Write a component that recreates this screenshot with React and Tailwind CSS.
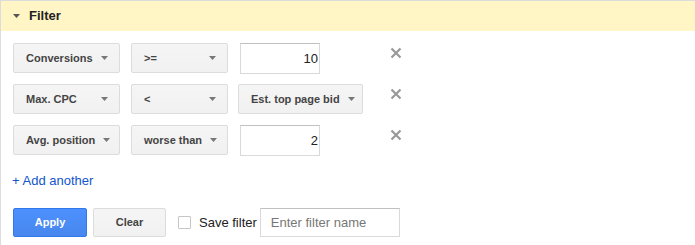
import React from "react";

function Arrow() {
  return (
    <svg width="7" height="4" viewBox="0 0 7 4" className="shrink-0">
      <polygon points="0,0 7,0 3.5,4" fill="#777" />
    </svg>
  );
}

function XIcon() {
  return (
    <svg width="12" height="12" viewBox="0 0 12 12" className="shrink-0">
      <path d="M1.5 1.5 L10.5 10.5 M10.5 1.5 L1.5 10.5" stroke="#999" strokeWidth="2.2" strokeLinecap="butt" />
    </svg>
  );
}

function Select({ label, w }) {
  return (
    <div
      className={`${w} h-[30px] shrink-0 flex items-center justify-between pl-[12px] pr-[11px] gap-[8px] rounded-[2px] border border-[#dcdcdc] bg-gradient-to-b from-[#f5f5f5] to-[#f1f1f1] text-[11px] font-bold text-[#444] whitespace-nowrap`}
    >
      <span>{label}</span>
      <Arrow />
    </div>
  );
}

function NumInput({ value }) {
  return (
    <div className="ml-[2px] w-[80px] h-[31px] shrink-0 flex items-center justify-end pr-[1px] border border-[#d9d9d9] border-t-[#c0c0c0] bg-white text-[13px] text-[#222]">
      {value}
    </div>
  );
}

function Row({ a, b, third }) {
  return (
    <div className="flex items-start h-[30px]">
      <Select label={a} w="w-[107px]" />
      <div className="ml-[11px]">
        <Select label={b} w="w-[97px]" />
      </div>
      <div className="ml-[10px] w-[152px] shrink-0 flex">{third}</div>
      <div className="pt-[4px]">
        <XIcon />
      </div>
    </div>
  );
}

export default function App() {
  return (
    <div
      className="w-[695px] h-[245px] bg-white border-l border-t border-[#dcdcdc] overflow-hidden"
      style={{ fontFamily: '"Liberation Sans", Arial, sans-serif' }}
    >
      <div className="h-[30px] bg-[#fff5c5] flex items-center pl-[12px]">
        <svg width="7" height="4" viewBox="0 0 7 4" className="mr-[9px]">
          <polygon points="0,0 7,0 3.5,4" fill="#555" />
        </svg>
        <span className="text-[13px] font-bold text-[#222]">Filter</span>
      </div>
      <div className="pl-[12px] pt-[12px]">
        <div className="flex flex-col gap-[11px]">
          <Row a="Conversions" b=">=" third={<NumInput value="10" />} />
          <Row
            a="Max. CPC"
            b="<"
            third={<Select label="Est. top page bid" w="w-[125px]" />}
          />
          <Row a="Avg. position" b="worse than" third={<NumInput value="2" />} />
        </div>
        <div className="mt-[18px] h-[16px] leading-[16px] text-[13px] text-[#15c] -ml-[1px]">
          + Add another
        </div>
        <div className="mt-[19px] flex items-center">
          <div className="w-[74px] h-[29px] flex items-center justify-center rounded-[2px] border border-[#3079ed] bg-gradient-to-b from-[#4d90fe] to-[#4787ed] text-white text-[11px] font-bold">
            Apply
          </div>
          <div className="ml-[6px] w-[73px] h-[29px] flex items-center justify-center rounded-[2px] border border-[#dcdcdc] bg-gradient-to-b from-[#f5f5f5] to-[#f1f1f1] text-[#444] text-[11px] font-bold">
            Clear
          </div>
          <div className="ml-[12px] w-[13px] h-[13px] border border-[#c6c6c6] rounded-[1px] bg-white" />
          <span className="ml-[8px] text-[13px] text-[#222]">Save filter</span>
          <div className="ml-[3px] w-[140px] h-[29px] flex items-center pl-[10px] border border-[#d9d9d9] border-t-[#c0c0c0] bg-white text-[13px] text-[#777]">
            Enter filter name
          </div>
        </div>
      </div>
    </div>
  );
}
